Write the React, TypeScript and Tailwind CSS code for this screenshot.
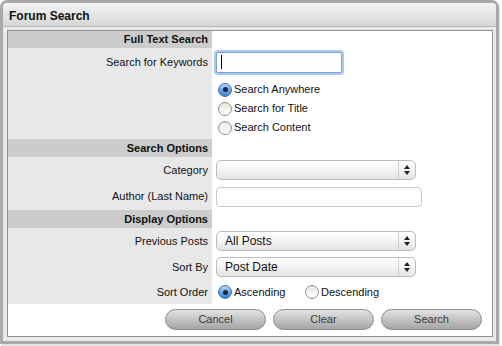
const font = { fontFamily: '"Liberation Sans", Arial, sans-serif' };

function Radio({ checked }: { checked?: boolean }) {
  return checked ? (
    <span className="relative inline-flex w-[14px] h-[14px] rounded-full border border-[#3d6fb0] bg-gradient-to-b from-[#b9d6f5] via-[#6ea6e6] to-[#3d84d6] items-center justify-center shrink-0">
      <span className="w-[5px] h-[5px] rounded-full bg-[#1b2a3a]" />
    </span>
  ) : (
    <span className="inline-block w-[14px] h-[14px] rounded-full border border-[#8e8e8e] bg-gradient-to-b from-[#e6e6e6] to-[#ffffff] shrink-0" />
  );
}

function Select({ value }: { value?: string }) {
  return (
    <div className="flex items-center w-[200px] h-[20px] rounded-[5px] border border-[#bdbdbd] bg-gradient-to-b from-[#ffffff] via-[#f3f3f3] to-[#e4e4e4] shadow-[0_1px_0_rgba(255,255,255,0.8)]">
      <span className="flex-1 pl-[8px] text-[12px] text-[#111] leading-none">{value}</span>
      <span className="h-full border-l border-[#cfcfcf] w-[17px] flex items-center justify-center">
        <svg width="6" height="10" viewBox="0 0 6 10">
          <path d="M3 0 L6 4 L0 4 Z" fill="#222" />
          <path d="M0 6 L6 6 L3 10 Z" fill="#222" />
        </svg>
      </span>
    </div>
  );
}

function Header({ title }: { title: string }) {
  return (
    <>
      <div className="bg-[#cccccc] flex items-center justify-end pr-[4px] text-[11px] font-bold text-[#111]">{title}</div>
      <div className="bg-white" />
    </>
  );
}

function Label({ text }: { text: string }) {
  return <div className="bg-[#e8e8e8] flex items-center justify-end pr-[4px] text-[11px] text-[#111]">{text}</div>;
}

function Btn({ text }: { text: string }) {
  return (
    <button className="w-[101px] h-[21px] rounded-full border border-[#8a8a8a] bg-gradient-to-b from-[#e4e4e4] via-[#c4c4c4] to-[#a4a4a4] text-[11px] text-[#3a3a3a] leading-none">
      {text}
    </button>
  );
}

export default function App() {
  return (
    <div className="w-[502px] h-[346px] bg-white" style={font}>
      <div className="w-[499px] h-[344px] border-[3px] border-[#a9a9a9] rounded-t-[7px] bg-[#e9e9e9] flex flex-col shadow-[1px_2px_1px_rgba(0,0,0,0.12)]">
        <div className="h-[24px] shrink-0 bg-gradient-to-b from-[#f4f4f4] to-[#d6d6d6] border-b border-[#b8b8b8] flex items-center pl-[6px] pt-[3px] rounded-t-[4px]">
          <span className="text-[12px] font-bold text-[#111]">Forum Search</span>
        </div>
        <div className="mt-[3px] ml-[4px] w-[486px] h-[307px] border border-[#8f8f8f] bg-white grid grid-cols-[204px_1fr] grid-rows-[17px_28px_63px_18px_26px_27px_18px_26px_26px_24px_32px]">
          <Header title="Full Text Search" />

          <Label text="Search for Keywords" />
          <div className="flex items-center pl-[4px]">
            <div className="w-[126px] h-[21px] border border-[#7aa3d6] rounded-[2px] shadow-[0_0_0_2px_#a9c9ef] bg-white flex items-center pl-[4px]">
              <span className="w-px h-[14px] bg-black" />
            </div>
          </div>

          <div className="bg-[#e8e8e8]" />
          <div className="flex flex-col pt-[4px] pl-[6px] text-[11px] text-[#111]">
            <div className="h-[19px] flex items-center gap-[2px]"><Radio checked /><span>Search Anywhere</span></div>
            <div className="h-[19px] flex items-center gap-[2px]"><Radio /><span>Search for Title</span></div>
            <div className="h-[19px] flex items-center gap-[2px]"><Radio /><span>Search Content</span></div>
          </div>

          <Header title="Search Options" />

          <Label text="Category" />
          <div className="flex items-center pl-[4px]"><Select /></div>

          <Label text="Author (Last Name)" />
          <div className="flex items-center pl-[4px]">
            <div className="w-[206px] h-[20px] border border-[#c9c9c9] rounded-[4px] bg-white" />
          </div>

          <Header title="Display Options" />

          <Label text="Previous Posts" />
          <div className="flex items-center pl-[4px]"><Select value="All Posts" /></div>

          <Label text="Sort By" />
          <div className="flex items-center pl-[4px]"><Select value="Post Date" /></div>

          <Label text="Sort Order" />
          <div className="flex items-center pl-[6px] text-[11px] text-[#111]">
            <div className="flex items-center gap-[2px] w-[87px]"><Radio checked /><span>Ascending</span></div>
            <div className="flex items-center gap-[2px]"><Radio /><span>Descending</span></div>
          </div>

          <div className="col-span-2 flex items-center justify-end gap-[7px] pr-[10px] pb-[1px]">
            <Btn text="Cancel" />
            <Btn text="Clear" />
            <Btn text="Search" />
          </div>
        </div>
      </div>
    </div>
  );
}
